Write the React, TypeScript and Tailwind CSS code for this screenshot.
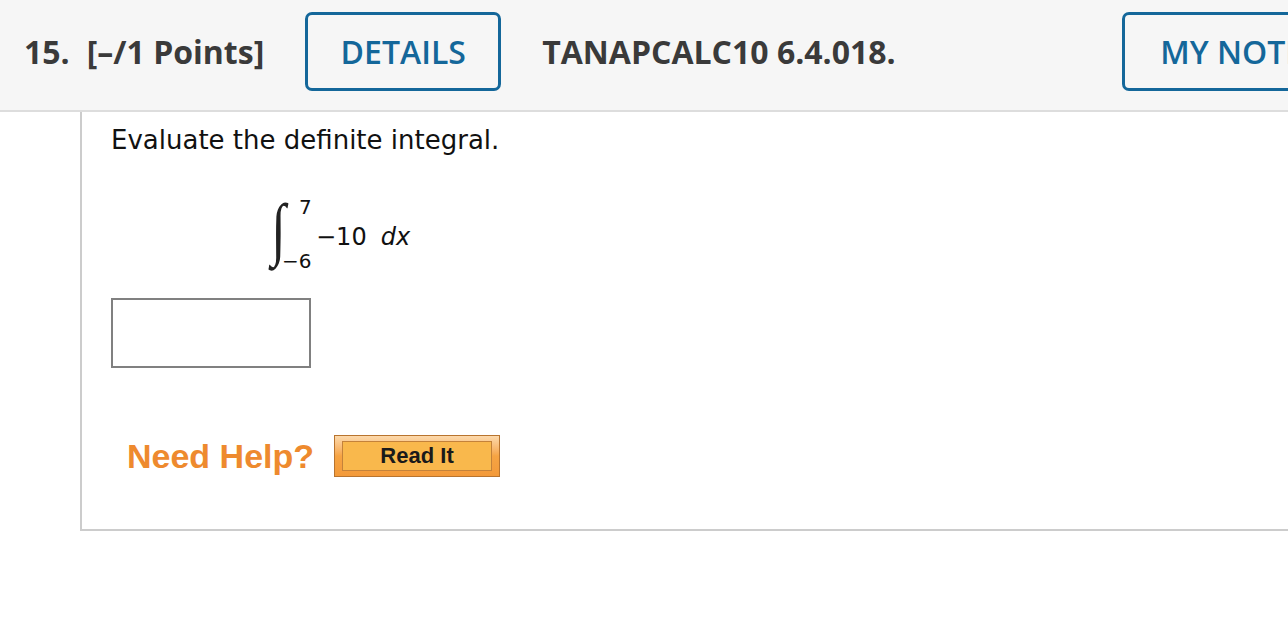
export default function App() {
  return (
    <div className="w-[1288px] h-[617px] overflow-hidden bg-white">
      <header className="flex items-start h-[112px] bg-[#f6f6f6] border-b-2 border-[#dddddd] pt-[12px] pl-[24px] text-[#3a3a3a] font-['Open_Sans',sans-serif] whitespace-nowrap">
        <div className="h-[79px] flex items-center shrink-0">
          <span className="text-[32px] font-bold">15.</span>
          <span className="ml-[17px] text-[32px] font-bold">[–/1 Points]</span>
        </div>
        <button className="ml-[41px] shrink-0 w-[196px] h-[79px] border-[3px] border-[#14679a] rounded-[7px] text-[#14679a] text-[32px] font-semibold flex items-center justify-center">
          DETAILS
        </button>
        <div className="h-[79px] w-[621px] shrink-0 flex items-center pl-[41px]">
          <span className="text-[32px] font-bold">TANAPCALC10 6.4.018.</span>
        </div>
        <button className="shrink-0 w-[230px] h-[79px] border-[3px] border-[#14679a] rounded-[7px] text-[#14679a] text-[32px] font-semibold flex items-center pl-[35px]">
          MY NOTES
        </button>
      </header>

      <div className="ml-[80px] h-[419px] border-l-2 border-b-2 border-[#cccccc] pl-[29px] pt-[13px] font-['DejaVu_Sans',sans-serif] text-[#111]">
        <p className="text-[26px] leading-[30px]">Evaluate the definite integral.</p>

        <div className="mt-[41px] ml-[154px] flex items-start h-[76px]">
          <div className="w-[15px] h-[76px] flex items-center justify-center shrink-0">
            <span className="font-['Liberation_Serif',serif] text-[48px] leading-none scale-y-[1.45] scale-x-[1.1] translate-x-[6px] -translate-y-[5px] inline-block text-[#222]">∫</span>
          </div>
          <div className="flex flex-col justify-between h-[76px] text-[20px] leading-[22px] shrink-0 w-[31px] pl-[2px]">
            <span className="ml-[17px]">7</span>
            <span>−6</span>
          </div>
          <div className="ml-[5px] mt-[27px] text-[24px] leading-[28px] whitespace-nowrap">
            <span>−10</span>
            <span className="ml-[14px] italic">dx</span>
          </div>
        </div>

        <div className="mt-[26px] w-[200px] h-[70px] border-2 border-[#808080] bg-white" />

        <div className="mt-[67px] flex items-center h-[42px]">
          <span className="ml-[16px] font-['Liberation_Sans',sans-serif] font-bold text-[34px] text-[#ee8a2e] whitespace-nowrap">Need Help?</span>
          <button className="ml-[20px] w-[166px] h-[42px] border border-[#b8742f] bg-linear-to-b from-[#fcd9ab] via-[#f6a443] to-[#f39a3a] px-[7px] py-[5px] shrink-0">
            <div className="w-full h-full border border-[#c4823a] bg-[#f9b84c] flex items-center justify-center">
              <span className="font-['Liberation_Sans',sans-serif] font-bold text-[22px] leading-none text-[#1a1a1a]">Read It</span>
            </div>
          </button>
        </div>
      </div>
    </div>
  );
}
